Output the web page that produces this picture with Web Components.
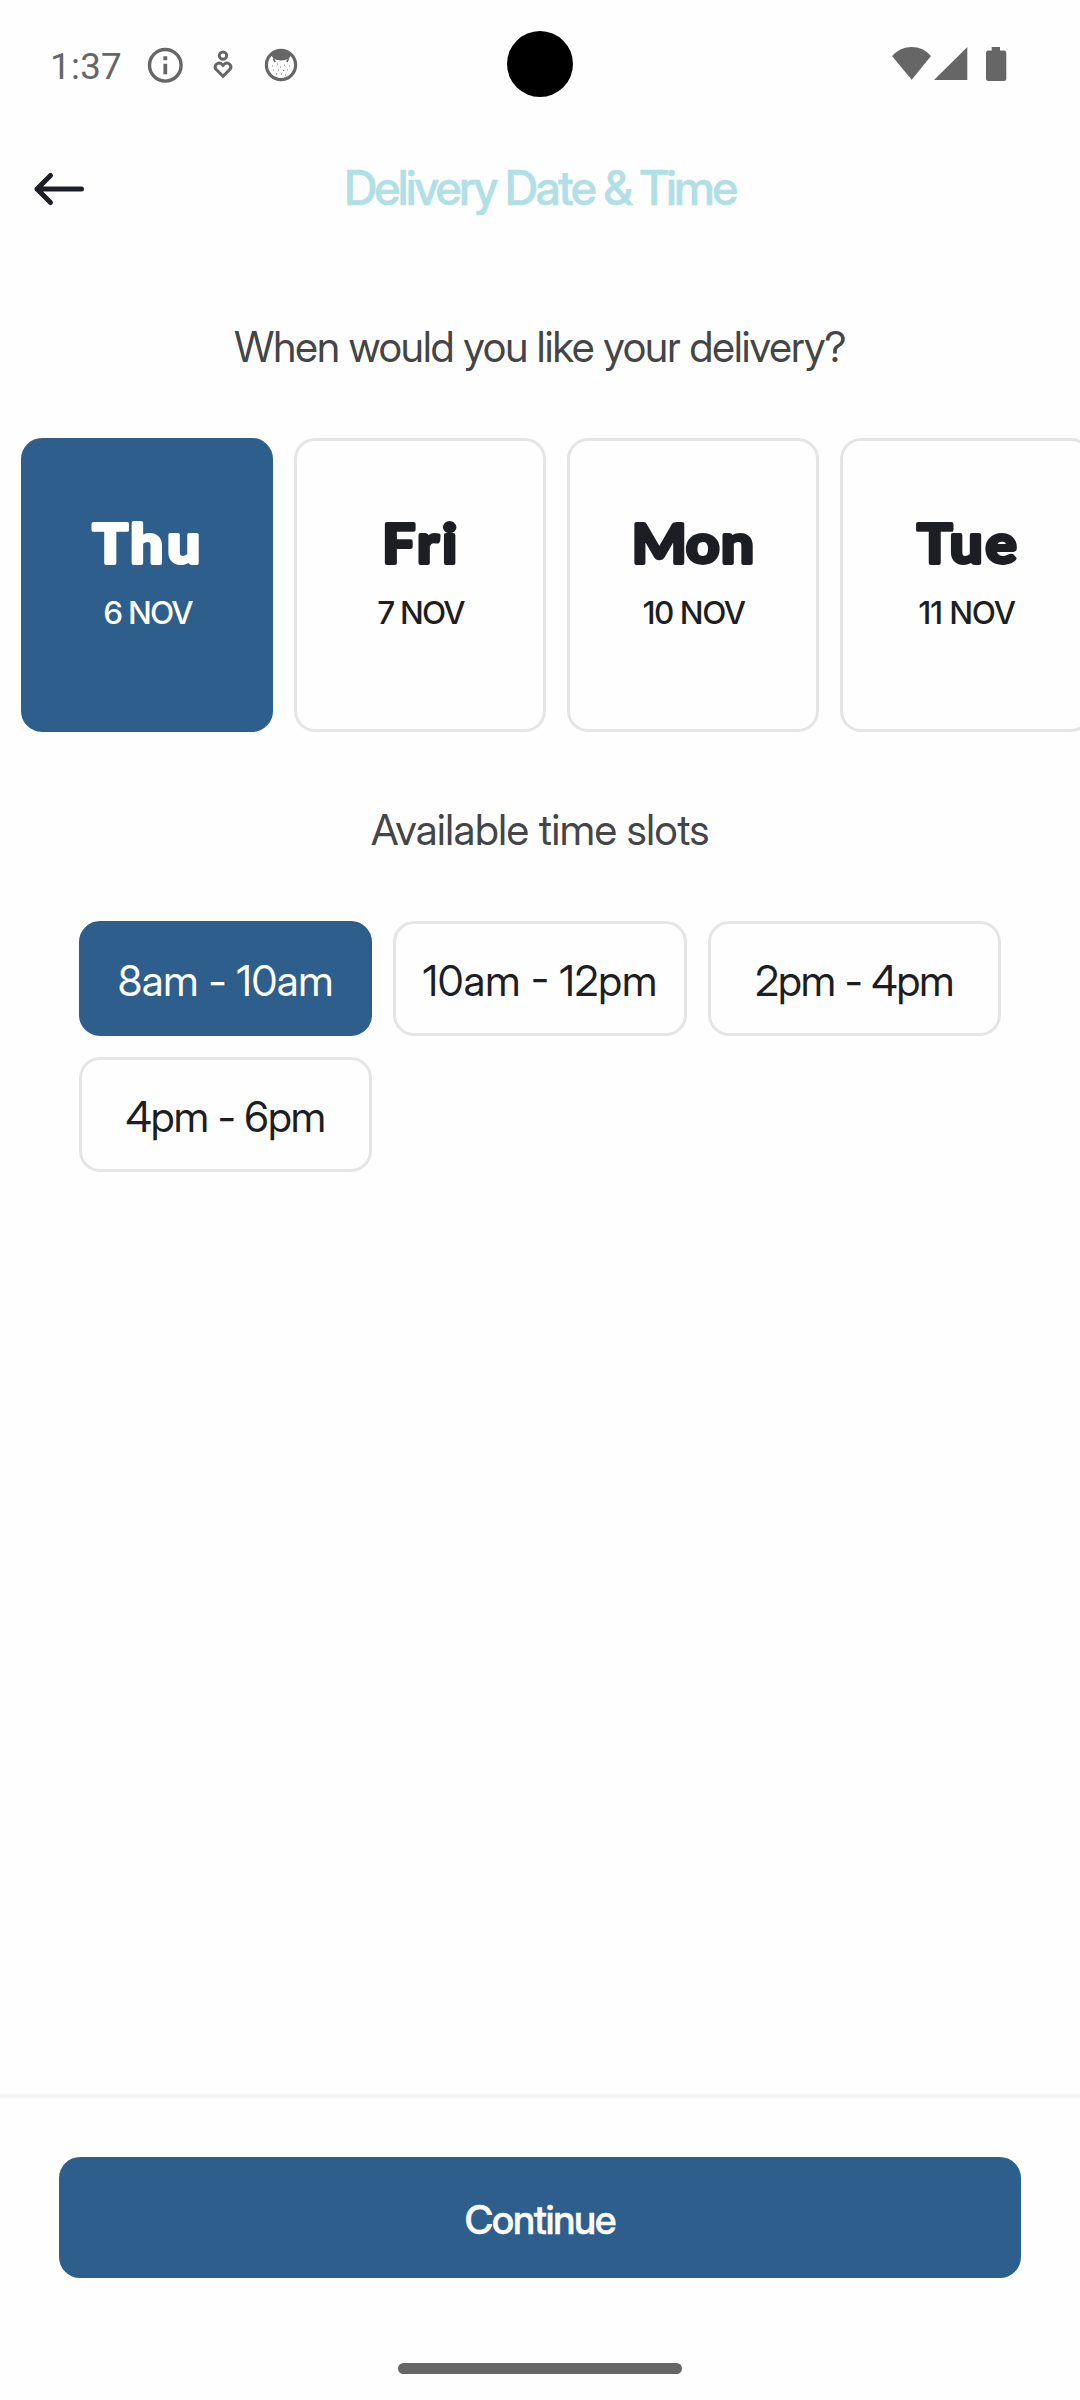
<!DOCTYPE html>
<html lang="en"><head><meta charset="utf-8"><title>Delivery Date &amp; Time</title>
<style>body{margin:0;background:#fefefe}</style></head><body>
<delivery-screen></delivery-screen>
<script>
const define=(name,html,setup)=>customElements.define(name,class extends HTMLElement{
  connectedCallback(){if(this.shadowRoot)return;const r=this.attachShadow({mode:'open'});r.innerHTML=html;if(setup)setup(this,r);}
});

define('status-bar',`<style>
:host{display:flex;height:128px;box-sizing:border-box;align-items:center;justify-content:space-between;position:relative;color:#666;font:400 36.75px/44px Roboto,sans-serif}
.l{display:flex;align-items:center;padding-left:50px}
.t{width:81px;padding-top:5px;letter-spacing:.3px}
.cam{position:absolute;left:507px;top:31px;width:66px;height:66px;border-radius:50%;background:#000}
svg{display:block}
</style>
<div class="l"><span class="t">1:37</span>
<svg width="180" height="44" viewBox="131 42 180 44" fill="none" stroke="#666">
<circle cx="165.300" cy="65.300" r="15.800" stroke-width="3.400"/><path d="M165.300 56.300v4M165.300 63.800v10.400" stroke-width="3.800"/>
<circle cx="223" cy="55.600" r="3.700" stroke-width="3"/>
<path d="M223 76.300L215.800 69.100A3.900 3.900 0 0 1 221.300 63.800L223 65.500L224.700 63.800A3.900 3.900 0 0 1 230.200 69.100Z" stroke-width="3"/>
<circle cx="281" cy="65" r="14.600" stroke-width="3.200"/>
<path d="M268.500 57Q272 49.500 281 49.500T293.500 57L290.500 55.700L289 58.500Q285 60.500 281 60.500T273.500 58.500L271.500 55.700Z" fill="#666" stroke="none"/>
<path d="M273.500 58.500l1.600 3.600M288.500 58.500l-1.600 3.600" stroke-width="1.600"/>
<path d="M272 66h1M277 64h1M284 65h1M289 66h1M273 70h1M278 70h1M283 70.500h1.300M287 70h1M281 74h1M276 74h1M285 75h1M280 67h1" stroke-width=".9"/>
</svg></div>
<span class="cam"></span>
<svg width="188" height="44" viewBox="892 42 188 44" fill="#666"><path d="M892 56Q900 47 911.700 47T931 56L911.700 79.700ZM934 80L967.300 47V80ZM991.700 47h8.300v3.500h3.800a2.500 2.500 0 0 1 2.500 2.500v25.500a2.500 2.500 0 0 1-2.500 2.500h-15.300a2.500 2.500 0 0 1-2.500-2.500v-25.500a2.500 2.500 0 0 1 2.500-2.500h3.200Z"/></svg>`);

define('app-header',`<style>
:host{display:grid;grid-template-columns:118px 1fr 118px;align-items:center;height:121px;color:#b0dfe5;text-align:center;font:500 47.25px/57px "Inter Display",Inter,sans-serif;letter-spacing:-2.3px;-webkit-text-stroke:.5px #b0dfe5}
svg{display:block}span{padding-bottom:2px}
</style><svg width="118" height="60" viewBox="0 158.500 118 60" fill="none" stroke="#1d1e26" stroke-width="5" stroke-linecap="round" stroke-linejoin="round"><path d="M50.500 175L37 188.500L50.500 202M37 188.500H81.500"/></svg><span><slot></slot></span>`);

define('section-title',`<style>
:host{display:block;text-align:center;color:#444547;font:400 42px/52px "Inter Display",Inter,sans-serif}
</style><slot></slot>`);

// Rounded heavy weekday lettering: bold letterforms softened by a round stroke.
const columns={
  Thu:'62.4 96.6 130.3',
  Fri:'77.6 109 132.1',
  Mon:'56.2 105.4 137.2',
  Tue:'67.4 97 129.6'
};
define('date-card',`<style>
:host{display:flex;flex:none;flex-direction:column;align-items:center;box-sizing:border-box;width:252px;height:294px;padding-top:73px;border:3px solid #e5e5e8;border-radius:21px;color:#1d1e24}
:host([selected]){background:#2d5e8c;border-color:#2d5e8c;color:#fff}
svg{display:block;overflow:visible}
text{font:700 53px Lato,sans-serif;letter-spacing:0;fill:currentColor;stroke:currentColor;stroke-width:3.8px;stroke-linejoin:round;stroke-linecap:round}
.d{font:500 31.5px/40px Inter,sans-serif;margin-top:19px;padding-left:1px;white-space:nowrap}
</style><svg width="246" height="60"><text y="49" transform="scale(1.1 1)"></text></svg><div class="d"><slot></slot></div>`,(el,r)=>{
  const t=r.querySelector('text');t.textContent=el.getAttribute('day');t.setAttribute('x',columns[el.getAttribute('day')]);
});

define('time-slot',`<style>
:host{display:flex;align-items:center;justify-content:center;box-sizing:border-box;height:115px;border:3px solid #e5e5e8;border-radius:21px;color:#1d1e24;font:400 42px/52px "Inter Display",Inter,sans-serif;padding-top:5px;white-space:nowrap}
:host([selected]){background:#2d5e8c;border-color:#2d5e8c;color:#fff}
</style><slot></slot>`);

define('action-button',`<style>
:host{display:flex;align-items:center;justify-content:center;box-sizing:border-box;height:121px;padding-top:4px;border-radius:21px;background:#2d5e8c;color:#fff;font:500 39.375px/48px "Inter Display",Inter,sans-serif;letter-spacing:-1.15px;-webkit-text-stroke:.5px #fff}
</style><slot></slot>`);

define('delivery-screen',`<style>
:host{display:flex;flex-direction:column;width:1080px;height:2400px;overflow:hidden;background:#fefefe}
.q{margin-top:72px;letter-spacing:-.88px}
.dates{display:flex;gap:21px;padding-left:21px;margin-top:65px;overflow:hidden}
.a{margin-top:72px;letter-spacing:-.4px}
.slots{display:grid;grid-template-columns:repeat(3,1fr);gap:21px;margin-top:65px;padding:0 78.750px}
footer{margin-top:auto;height:306px;box-sizing:border-box;border-top:4px solid #f7f7f7;padding:59px 59px 0;display:flex;flex-direction:column}
.home{width:284px;height:11px;border-radius:6px;background:#666;margin:85px auto 0}
</style>
<status-bar></status-bar>
<app-header>Delivery Date &amp; Time</app-header>
<section-title class="q">When would you like your delivery?</section-title>
<div class="dates">
<date-card selected day="Thu" style="letter-spacing:-1.8px">6 NOV</date-card>
<date-card day="Fri" style="letter-spacing:-1.8px">7 NOV</date-card>
<date-card day="Mon" style="letter-spacing:-1.5px">10 NOV</date-card>
<date-card day="Tue" style="letter-spacing:-1.2px">11 NOV</date-card>
</div>
<section-title class="a">Available time slots</section-title>
<div class="slots">
<time-slot selected style="letter-spacing:-.28px">8am - 10am</time-slot><time-slot style="letter-spacing:0">10am - 12pm</time-slot><time-slot style="letter-spacing:-.9px">2pm - 4pm</time-slot><time-slot style="letter-spacing:-.9px">4pm - 6pm</time-slot>
</div>
<footer><action-button>Continue</action-button><div class="home"></div></footer>`);
</script></body></html>
